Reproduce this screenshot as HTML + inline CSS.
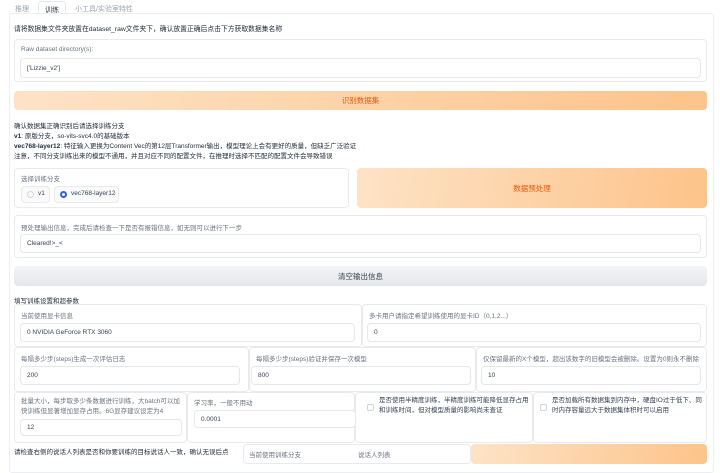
<!DOCTYPE html>
<html><head><meta charset="utf-8"><style>
*{box-sizing:border-box;margin:0;padding:0}
body{width:720px;height:457px;overflow:hidden;background:#fff;font-family:"Liberation Sans","Noto Sans CJK SC",sans-serif;font-size:7px;color:#374151;position:relative}
.a{position:absolute}
.box{position:absolute;border:1px solid #e9eaee;border-radius:4px;background:#fff}
.lbl{position:absolute;font-size:6.5px;color:#6b7280}
.inp{position:absolute;border:1px solid #e5e7eb;border-radius:4px;background:#fff;font-size:6.5px;color:#374151;padding-left:6px;display:flex;align-items:center}
.ob{position:absolute;border-radius:4px;background:linear-gradient(100deg,#fde3c6,#fdc38a);color:#ea580c;font-size:7.5px;display:flex;align-items:center;justify-content:center}
.t{position:absolute;font-size:6.5px;color:#1f2937;white-space:nowrap}
.cb{position:absolute;width:7px;height:7px;border:1px solid #d1d5db;border-radius:2px}
</style></head><body>
<div class="a" style="left:15px;top:4px;font-size:7px;color:#9ca3af">推理</div>
<div class="a" style="left:38px;top:1px;width:28px;height:13px;border:1px solid #e5e7eb;border-bottom:none;border-radius:3px 3px 0 0;background:#fff;font-size:7px;text-align:center;padding-top:3px;color:#374151">训练</div>
<div class="a" style="left:75px;top:4px;font-size:7px;color:#9ca3af">小工具/实验室特性</div>
<div class="a" style="left:9px;top:13px;width:705px;height:460px;border:1px solid #eceef1;border-radius:3px"></div>
<div class="t" style="left:14px;top:23px;font-size:6.8px">请将数据集文件夹放置在dataset_raw文件夹下，确认放置正确后点击下方获取数据集名称</div>
<div class="box" style="left:14px;top:39px;width:693px;height:43px"></div>
<div class="lbl" style="left:21px;top:46px">Raw dataset directory(s):</div>
<div class="inp" style="left:20px;top:58px;width:681px;height:20px">['Lizzie_v2']</div>
<div class="ob" style="left:14px;top:91px;width:693px;height:19px">识别数据集</div>
<div class="t" style="left:14px;top:120px">确认数据集正确识别后请选择训练分支</div>
<div class="t" style="left:14px;top:130px"><b>v1</b>: 原版分支，so-vits-svc4.0的基础版本</div>
<div class="t" style="left:14px;top:140px"><b>vec768-layer12</b>: 特征输入更换为Content Vec的第12层Transformer输出，模型理论上会有更好的质量，但缺乏广泛验证</div>
<div class="t" style="left:14px;top:150px">注意，不同分支训练出来的模型不通用，并且对应不同的配置文件，在推理时选择不匹配的配置文件会导致错误</div>
<div class="box" style="left:14px;top:168px;width:335px;height:40px"></div>
<div class="lbl" style="left:21px;top:173px">选择训练分支</div>
<div class="box" style="left:21px;top:186px;width:29px;height:17px;background:#fafafa"></div>
<div class="a" style="left:27px;top:191px;width:7px;height:7px;border:1px solid #d1d5db;border-radius:50%"></div>
<div class="a" style="left:38px;top:190px;font-size:6.5px">v1</div>
<div class="box" style="left:54px;top:186px;width:65px;height:17px;background:#fafafa"></div>
<div class="a" style="left:60px;top:191px;width:7px;height:7px;border:2.2px solid #2563eb;border-radius:50%"></div>
<div class="a" style="left:71px;top:190px;font-size:6.5px">vec768-layer12</div>
<div class="ob" style="left:357px;top:168px;width:350px;height:40px">数据预处理</div>
<div class="box" style="left:14px;top:215px;width:693px;height:43px"></div>
<div class="lbl" style="left:21px;top:222px">预处理输出信息，完成后请检查一下是否有报错信息，如无则可以进行下一步</div>
<div class="inp" style="left:20px;top:234px;width:681px;height:19px">Cleared!&gt;_&lt;</div>
<div class="a" style="left:14px;top:266px;width:693px;height:20px;border-radius:4px;background:linear-gradient(#f3f4f6,#e5e7eb);font-size:7.5px;color:#374151;display:flex;align-items:center;justify-content:center">清空输出信息</div>
<div class="t" style="left:14px;top:295px">填写训练设置和超参数</div>
<div class="box" style="left:14px;top:304px;width:348px;height:43px"></div>
<div class="lbl" style="left:21px;top:310px">当前使用显卡信息</div>
<div class="inp" style="left:20px;top:323px;width:335px;height:19px">0 NVIDIA GeForce RTX 3060</div>
<div class="box" style="left:362px;top:304px;width:345px;height:43px"></div>
<div class="lbl" style="left:369px;top:310px">多卡用户请指定希望训练使用的显卡ID（0,1,2...）</div>
<div class="inp" style="left:367px;top:323px;width:334px;height:19px">0</div>
<div class="box" style="left:14px;top:347px;width:235px;height:45px"></div>
<div class="lbl" style="left:21px;top:353px">每隔多少步(steps)生成一次评估日志</div>
<div class="inp" style="left:20px;top:366px;width:220px;height:19px">200</div>
<div class="box" style="left:249px;top:347px;width:227px;height:45px"></div>
<div class="lbl" style="left:256px;top:353px">每隔多少步(steps)验证并保存一次模型</div>
<div class="inp" style="left:251px;top:366px;width:220px;height:19px">800</div>
<div class="box" style="left:476px;top:347px;width:231px;height:45px"></div>
<div class="lbl" style="left:483px;top:353px">仅保留最新的X个模型，超出该数字的旧模型会被删除。设置为0则永不删除</div>
<div class="inp" style="left:481px;top:366px;width:220px;height:19px">10</div>
<div class="box" style="left:14px;top:392px;width:173px;height:51px"></div>
<div class="lbl" style="left:21px;top:397px;width:162px;line-height:10px">批量大小，每步取多少条数据进行训练，大batch可以加快训练但显著增加显存占用。6G显存建议设定为4</div>
<div class="inp" style="left:20px;top:419px;width:162px;height:17px">12</div>
<div class="box" style="left:187px;top:392px;width:168px;height:51px"></div>
<div class="lbl" style="left:194px;top:397px">学习率，一般不用动</div>
<div class="inp" style="left:194px;top:410px;width:162px;height:18px">0.0001</div>
<div class="box" style="left:355px;top:392px;width:178px;height:51px"></div>
<div class="cb" style="left:367px;top:404px"></div>
<div class="lbl" style="left:379px;top:396px;width:150px;line-height:10px;color:#374151">是否使用半精度训练，半精度训练可能降低显存占用和训练时间，但对模型质量的影响尚未查证</div>
<div class="box" style="left:533px;top:392px;width:174px;height:51px"></div>
<div class="cb" style="left:540px;top:404px"></div>
<div class="lbl" style="left:552px;top:396px;width:152px;line-height:10px;color:#374151">是否加载所有数据集到内存中，硬盘IO过于低下、同时内存容量远大于数据集体积时可以启用</div>
<div class="t" style="left:14px;top:446px;font-size:6.5px">请检查右侧的说话人列表是否和你要训练的目标说话人一致，确认无误后点</div>
<div class="box" style="left:243px;top:444px;width:228px;height:20px"></div>
<div class="lbl" style="left:249px;top:449px">当前使用训练分支</div>
<div class="lbl" style="left:358px;top:449px">说话人列表</div>
<div class="ob" style="left:471px;top:444px;width:236px;height:20px"></div>
</body></html>
